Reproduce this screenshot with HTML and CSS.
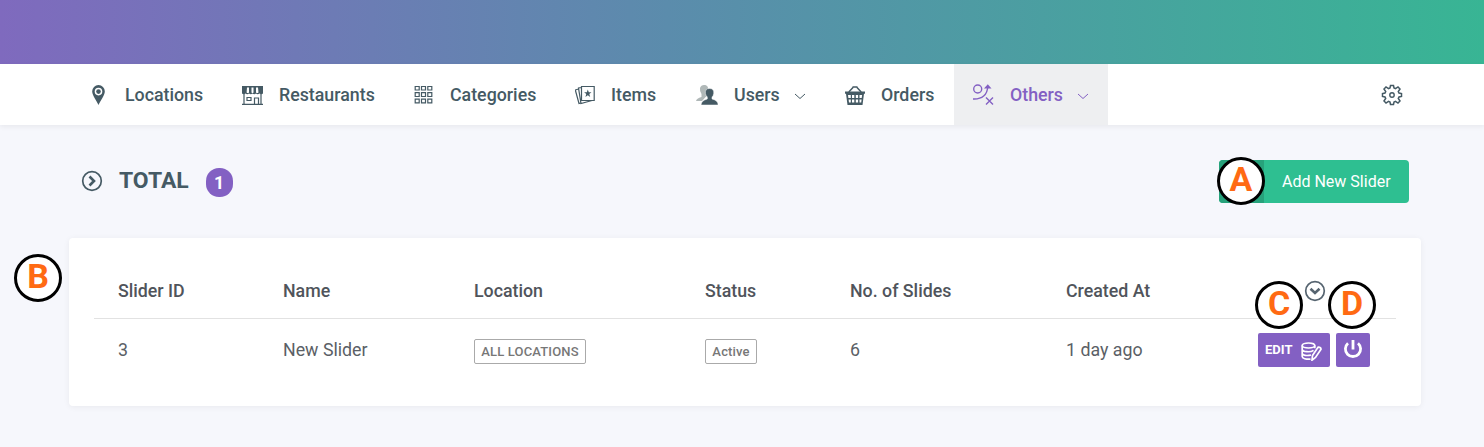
FILE: index.html
```
<!DOCTYPE html>
<html lang="en">
<head>
<meta charset="utf-8">
<title>Sliders</title>
<link rel="stylesheet" href="styles.css">
</head>
<body>
<header class="banner"></header>
<nav class="navbar">
  <a class="nav-item nav-locations"><svg class="icon" viewBox="0 0 20 20"><path fill-rule="evenodd" fill="currentColor" d="M9.500 0A6.300 6.300 0 0 0 3.200 6.400C3.200 10 7.500 15.500 9.500 20C11.500 15.500 15.800 10 15.800 6.400A6.300 6.300 0 0 0 9.500 0ZM9.500 2.800a3.800 3.800 0 1 1 0 7.600a3.800 3.800 0 0 1 0-7.600Z"/><circle cx="9.500" cy="6.600" r="2.300" fill="currentColor"/></svg><span>Locations</span></a>
  <a class="nav-item nav-restaurants"><svg class="icon icon-store" viewBox="0 0 21 20"><path fill="currentColor" d="M0 1h21v7.500q-1.700 1.500-3.500 0q-1.700 1.500-3.500 0q-1.700 1.500-3.500 0q-1.700 1.500-3.500 0q-1.700 1.500-3.500 0q-1.700 1.500-3.500 0z"/><path fill="#fff" d="M5 2.500h2v5q-1.200 1-2.400 0zM9.500 2.500h2v5q-1 1-2 0zM14 2.500h2l.5 5q-1.300 1-2.500 0z"/><path d="M2 9v10M19 9v10M0 19.300h21M12.500 19v-6h4v6M5 12.500h4v3H5z" fill="none" stroke="currentColor" stroke-width="1.200"/></svg><span>Restaurants</span></a>
  <a class="nav-item nav-categories"><svg class="icon" viewBox="0 0 20 20"><path d="M1.200 1.500h4v3.500h-4zM7.500 1.500h4v3.500h-4zM13.800 1.500h4v3.500h-4zM1.200 7.700h4v3.800h-4zM7.500 7.700h4v3.800h-4zM13.800 7.700h4v3.800h-4zM1.200 14.200h4v3.600h-4zM7.500 14.200h4v3.600h-4zM13.800 14.200h4v3.600h-4z" fill="none" stroke="currentColor" stroke-width="1.200"/></svg><span>Categories</span></a>
  <a class="nav-item nav-items"><svg class="icon" viewBox="0 0 20 20"><path d="M6.500 1.500h12.700v14H6.500zM6.500 2.500l-3 .5 2.500 15.500 11-3M3.500 4L.3 5l3.700 13.500 2-.5" fill="none" stroke="currentColor" stroke-width="1.200"/><path fill="currentColor" d="m12.800 4.600 1 2.700h2.700l-2.200 1.800.9 2.800-2.400-1.600-2.400 1.600.9-2.800-2.200-1.800h2.700z"/></svg><span>Items</span></a>
  <a class="nav-item nav-users"><svg class="icon icon-users" viewBox="0 0 22 20"><path fill="#b0b8b8" d="M8 0c3 0 4.500 1.500 4 5q-.4 3-1.500 4v2L6 16H0q.5-2.500 5.500-4V9Q3.500 6 4 3 5 0 8 0z"/><path fill="currentColor" stroke="#fff" stroke-width=".5" d="M13.500 3.500c3.300 0 4.600 2 4.200 5q-.3 2.300-1.700 3.500v2q6 1.500 6.200 6H5q.3-4.500 6.300-6v-2Q9.700 10.500 9.400 8.500c-.4-3 .8-5 4.100-5z"/></svg><span>Users</span><svg class="chevron" viewBox="0 0 12 7"><path d="M1 1l5 4.500L11 1" fill="none" stroke="currentColor"/></svg></a>
  <a class="nav-item nav-orders"><svg class="icon" viewBox="0 0 20 20"><path fill="currentColor" fill-rule="evenodd" d="M0 6.500h20v2.200h-1L17.500 20h-15L1 8.700H0zM3 10l.4 3h2.400v-3zM7 10v3h2.300v-3zM10.800 10v3h2.300v-3zM14.500 10v3h2.200l.4-3zM3.600 14.500l.4 3h1.800v-3zM7 14.500v3h2.300v-3zM10.800 14.500v3h2.300v-3zM14.500 14.500v3h1.700l.4-3z"/><path d="M3.800 7l4.200-4.500M16.200 7L12 2.500M7.500 2h5" fill="none" stroke="currentColor" stroke-width="1.500"/></svg><span>Orders</span></a>
  <a class="nav-item nav-others active"><svg class="icon icon-others" viewBox="0 0 21 21"><g fill="none" stroke="currentColor" stroke-width="1.400"><circle cx="4.700" cy="5" r="4"/><path d="M0 15C9 15.500 14.500 11 14.800 2M13 13.500l7 7M20 13.500l-7 7"/></g><path fill="currentColor" d="M11 4.500L14.800.3l3.700 4.200z"/></svg><span>Others</span><svg class="chevron" viewBox="0 0 12 7"><path d="M1 1l5 4.500L11 1" fill="none" stroke="currentColor"/></svg></a>
  <a class="settings"><svg class="gear" viewBox="0 0 22 22"><path d="M9.500 1.500h3l.5 2.500 1.500.7L17 3l2 2-1.700 2.500.7 1.500 2.500.5v3l-2.500.5-.7 1.500L19 17l-2 2-2.500-1.700-1.500.7-.5 2.500h-3L9 18l-1.500-.7L5 19l-2-2 1.700-2.500L4 13l-2.500-.5v-3L4 9l.7-1.500L3 5l2-2 2.500 1.700L9 4z" fill="none" stroke="currentColor" stroke-width="1.500"/><circle cx="11" cy="11" r="2.200" fill="none" stroke="currentColor" stroke-width="1.400"/></svg></a>
</nav>
<main class="content">
  <div class="page-header">
    <svg class="circle-arrow" viewBox="0 0 22 22"><circle cx="11" cy="11" r="9.300" fill="none" stroke="currentColor" stroke-width="1.700"/><path d="M8.500 6.500l4.500 4.500-4.500 4.500" fill="none" stroke="currentColor" stroke-width="2.600"/></svg>
    <h1 class="title">TOTAL</h1>
    <span class="count">1</span>
    <a class="add-button"><span class="add-icon"><b class="marker">A</b></span><span class="add-label">Add New Slider</span></a>
  </div>
  <section class="card">
    <b class="marker marker-b">B</b>
    <div class="row head">
      <span>Slider ID</span><span>Name</span><span>Location</span><span>Status</span><span>No. of Slides</span><span>Created At</span>
      <span class="head-action"><svg class="circle-arrow" viewBox="0 0 22 22"><circle cx="11" cy="11" r="9.300" fill="none" stroke="currentColor" stroke-width="1.700"/><path d="M6.500 8.700l4.500 4.300 4.500-4.300" fill="none" stroke="currentColor" stroke-width="2.600"/></svg></span>
    </div>
    <div class="row body">
      <span>3</span><span>New Slider</span><span><span class="tag">ALL LOCATIONS</span></span><span><span class="tag tag-status">Active</span></span><span>6</span><span>1 day ago</span>
      <span class="actions">
        <a class="button edit">EDIT<svg class="edit-icon" viewBox="0 0 21 19"><g fill="none" stroke="currentColor" stroke-width="1.700"><ellipse cx="7.500" cy="3.500" rx="6.300" ry="2.500"/><path d="M1.200 3.500v11c0 2 4 3 8.300 2.600M13.800 3.500v2.700M1.200 7.200c0 3 8.500 3.300 11.300 1.200M1.200 11c0 2.500 5 3 8.800 2"/><path d="M11.500 13.500l5.500-8.300q2.800-.2 3 2L14.500 15.500l-3.500 2.700z"/></g></svg><b class="marker marker-c">C</b></a>
        <a class="button power"><svg class="power-icon" viewBox="0 0 20 20"><path d="M5 4.200a7.600 7.600 0 1 0 10 0M10 1v9.500" fill="none" stroke="currentColor" stroke-width="2.800"/></svg><b class="marker marker-d">D</b></a>
      </span>
    </div>
  </section>
</main>
</body>
</html>
```
FILE: styles.css
```
* { box-sizing: border-box; }
body {
  margin: 0;
  height: 447px;
  overflow: hidden;
  background: #f6f7fc;
  color: #455a64;
  font-family: Roboto, "Liberation Sans", sans-serif;
  font-size: 17.8px;
}
.banner {
  height: 64px;
  background: linear-gradient(to right, #7f6abe, #5b8cac 45%, #38b594);
}
.navbar {
  display: flex;
  height: 61px;
  padding: 0 69px;
  background: #fff;
  box-shadow: 0 2px 5px rgba(0, 0, 0, .06);
}
.nav-item {
  display: flex;
  align-items: center;
  padding-left: 20px;
  font-weight: 500;
}
.nav-locations { width: 153px; }
.nav-restaurants { width: 172px; }
.nav-categories { width: 162px; }
.nav-items { width: 120px; padding-left: 19px; }
.nav-users { width: 149px; }
.nav-orders { width: 129px; }
.nav-others { width: 154px; padding-left: 19px; }
.active { background: #eeeff1; color: #8360c3; }
.icon { width: 20px; height: 20px; margin-right: 16px; }
.icon-store { width: 21px; }
.icon-users { width: 22px; }
.icon-others { width: 21px; height: 21px; }
.chevron { width: 12px; height: 7px; margin: 3px 0 0 14px; }
.settings { display: flex; align-items: center; margin-left: auto; padding-right: 12px; }
.gear { width: 22px; height: 22px; }
.content { padding: 35px 63px 0 69px; }
.page-header {
  display: flex;
  align-items: center;
  height: 43px;
  padding: 0 12px;
}
.circle-arrow { width: 22px; height: 22px; margin-bottom: 1px; }
.title { margin: 0 0 1px 16px; font-size: 22.9px; font-weight: 700; line-height: 1; }
.count {
  width: 27px;
  height: 29px;
  margin: 2px 0 0 17px;
  border-radius: 13px;
  background: #8360c3;
  color: #fff;
  font-weight: 700;
  line-height: 30px;
  text-align: center;
}
.add-button {
  display: flex;
  width: 190px;
  height: 43px;
  margin-left: auto;
  border-radius: 4px;
  background: #2ebf91;
  color: #fff;
  font-size: 16px;
  line-height: 43px;
}
.add-icon {
  position: relative;
  width: 45px;
  border-radius: 4px 0 0 4px;
  background: #27a27b;
}
.add-label { padding-left: 18px; white-space: nowrap; }
.card {
  position: relative;
  height: 168px;
  margin-top: 35px;
  padding: 25px 25px 0;
  border-radius: 4px;
  background: #fff;
  box-shadow: 0 1px 6px rgba(0, 0, 0, .06);
  color: #50545b;
}
.row {
  display: grid;
  grid-template-columns: 165px 191px 231px 145px 216px 192px 1fr;
  align-items: center;
  padding-left: 24px;
}
.head { height: 56px; border-bottom: 1px solid #e2e2e2; font-weight: 500; }
.head-action { display: flex; padding: 2px 0 0 46px; color: #566470; }
.body { height: 61px; color: #5b5f66; }
.tag {
  display: flex;
  align-items: center;
  justify-content: center;
  width: 112px;
  height: 25px;
  margin-top: 4px;
  border: 1px solid #aaa;
  border-radius: 2px;
  color: #777;
  font-size: 13px;
  font-weight: 500;
  letter-spacing: .15px;
}
.tag-status { width: 52px; }
.actions { display: flex; gap: 6px; padding-top: 1px; }
.button {
  position: relative;
  display: flex;
  align-items: center;
  height: 34px;
  border-radius: 2px;
  background: #8360c3;
  color: #fff;
  font-size: 13px;
  font-weight: 500;
}
.edit { width: 72px; padding: 0 0 2px 7px; font-weight: 700; }
.edit-icon { width: 21px; height: 19px; margin: 4px 0 0 9px; }
.power { width: 34px; justify-content: center; }
.power-icon { width: 20px; height: 20px; margin-top: -2px; }
/* Callout badges laid over the interface */
.marker {
  position: absolute;
  top: -3px;
  left: -2px;
  width: 48px;
  height: 48px;
  border: 3px solid #000;
  border-radius: 50%;
  background: #fff;
  color: #ff6a13;
  font-size: 34px;
  font-weight: 700;
  line-height: 39px;
  text-align: center;
}
.marker-b { top: 16px; left: -55px; }
.marker-c { top: -52px; left: -3px; }
.marker-d { top: -52px; left: -8px; }
```
